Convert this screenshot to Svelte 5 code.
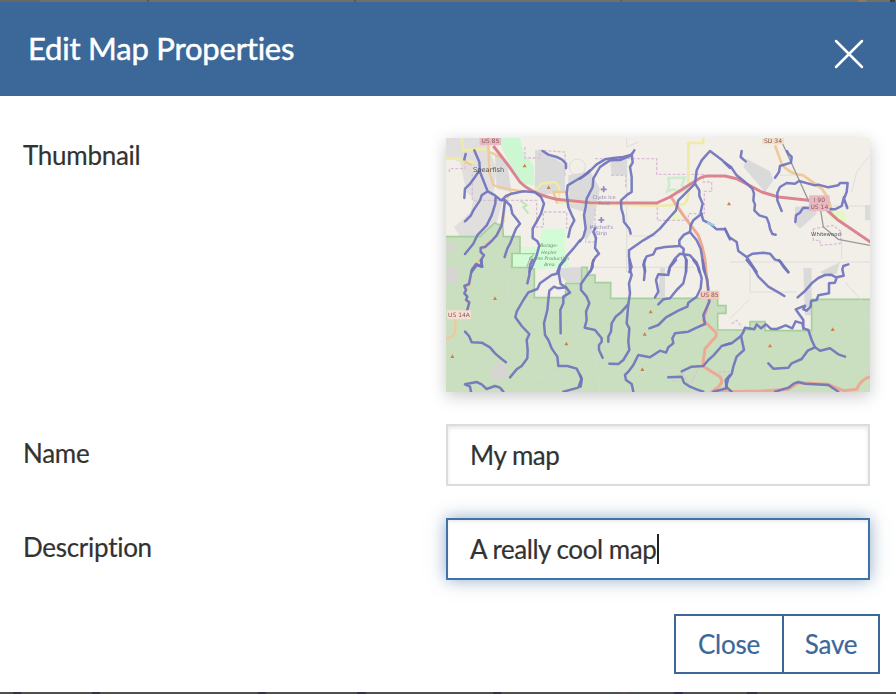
<script>
  // Streams traced per map sheet; each sheet has its own origin.
  const sheets = [
    { x: 0, y: 0, lines: [
      '77,66 73,82',
      '103,55 118,90 120,120 132,150 143,178 165,190 180,203 195,205',
      '120,112 105,135 88,158 75,170 73,198',
      '143,178 125,190 120,205 100,235 93,250 75,268',
      '167,195 166,215 155,250 140,280 112,310 100,335 75,366',
      '195,205 190,245 185,280 170,310 155,327 135,345 122,347 122,360 132,370 122,385 127,404 110,400 95,420',
      '195,205 212,222 217,245 230,262 240,275 228,290 220,310 210,335 202,350 194,375',
      '185,205 198,192 215,185 250,178 285,181 303,195 312,215 303,245 292,265 278,290 278,318 292,328 298,340 290,370 278,400 268,420',
      '308,57 325,68 350,75 365,82 378,95 378,108',
      '450,115 430,132 405,147 383,160 380,185 385,225 395,248 403,265 391,288 385,315',
      '420,325 400,350 382,370 360,400 352,420'
    ]},
    { x: 420, y: 0, lines: [
      '0,140 25,122 50,97 75,82 100,78 130,75 155,68 163,55',
      '155,70 120,84 90,85 70,98 60,105 40,140 38,165 20,200 17,225 12,250 17,290 10,315 0,328',
      '155,65 158,92 150,105 155,135 155,180 142,188 123,205 124,230 130,250 132,270 148,290 152,305',
      '46,288 40,300 48,318 45,348 57,365 45,377 38,392 38,405 30,420',
      '345,155 325,175 295,205 288,235 270,255 240,290 220,307 190,325 147,355 147,375 155,405 148,420',
      '450,108 425,83 390,57 378,70 365,85 350,115 345,155 358,175 358,192 368,215 362,240 370,265 390,275 410,292 435,291 450,322',
      '365,245 340,265 332,280 330,300 350,325 362,350 367,380 375,420',
      '330,300 312,308 298,325 298,342 255,345 228,350 220,367 200,373 192,390 195,420',
      '298,340 311,350 310,365 320,385 318,420',
      '265,420 270,403 285,380 300,365 330,370 350,392 358,420'
    ]},
    { x: 855, y: 0, lines: [
      '0,92 18,105 35,130 60,150 82,170 87,185 85,205 90,218 88,235 103,250 125,257 132,275 135,290 142,306 152,308',
      '50,57 47,75 62,88',
      '186,57 190,65 200,75 198,92 165,102 162,120 150,137',
      '170,237 157,205 157,182 165,165 185,153 210,155 222,147 270,160 280,158 310,166 340,160 345,153 368,153 365,180 357,200 367,228',
      '357,195 350,222 330,232 290,230 235,227 225,242 213,250 211,270',
      '0,290 12,315 35,330 40,357 65,375 95,420',
      '65,375 83,365 115,362 135,365 150,383 165,387 190,420'
    ]},
    { x: 0, y: 384, lines: [
      '125,0 125,20 108,12 95,30 87,72 73,78 78,90 73,100 82,110 78,120 88,127 83,145 77,165',
      '277,0 270,15 268,45 262,70',
      '375,0 360,17 356,40 335,45 300,70 292,87 265,97 250,120 230,155 226,172 245,198 268,222 260,240 263,270 262,295 245,318 230,328 210,352',
      '356,40 362,72 378,82 390,98 370,110 370,130 361,150 362,220',
      '378,82 355,85 342,80 328,92 325,120 322,150 312,190 315,225 325,240 335,265 352,290 355,318 382,318 410,326 425,355 415,383 370,395',
      '75,215 87,228 95,247 125,248 150,262 165,280 185,297 198,307',
      '93,395 90,380 75,373 110,366 125,373 140,387 165,378 180,383 190,395'
    ]},
    { x: 420, y: 384, lines: [
      '40,0 33,30 18,50 3,72 3,90 20,110 28,130 18,155 20,180 14,203 45,210 65,235 65,245 57,255 57,270 68,293',
      '148,0 150,30 155,45 147,70 150,100 145,132 140,190 148,205 145,245 148,270 130,300 115,312 88,311',
      '145,132 125,155 107,170 95,190 93,215 85,230 85,245',
      '195,0 190,15 195,30 192,60',
      '288,0 270,22 265,45 235,43 228,60 235,95 225,112',
      '318,0 318,35 310,70 290,90 270,115 250,118 235,133',
      '340,0 355,20 365,55 362,85 350,110 325,128 322,140 295,152 258,172 235,195 208,205',
      '368,0 370,25 382,60 388,125 370,165 375,192 350,203 325,215 285,220 277,235 280,250 265,262 258,278 240,272 210,292 175,285 160,315 145,335 135,345 138,360 155,372 160,395',
      '450,250 425,258 400,287 385,300 370,318 335,320 305,334',
      '265,352 305,350 312,368 330,380 350,388 370,395',
      '0,345 5,360 2,380',
      '400,395 440,385 437,360 450,345'
    ]},
    { x: 855, y: 384, lines: [
      '65,0 85,25 100,50 130,80 160,97 178,108',
      '162,0 175,20 190,37',
      '370,13 355,18 352,28 356,47 335,52 330,68 312,70 312,100 280,106 275,120 258,123 257,140 245,152 235,148 240,137 212,148 222,162 235,180 235,205',
      '218,112 240,93 260,70 280,54 300,45 318,44 333,52',
      '235,205 232,190 212,184 202,205 182,196 155,207 137,206 123,193 108,205 95,193 88,208 60,203 54,218 48,228 20,250 0,255',
      '48,228 52,247 57,270 35,290 25,320 20,342 10,355 3,380 20,395',
      '235,205 250,210 260,240 270,262 285,272 315,265 340,283 360,290',
      '270,262 248,272 230,297 200,310 190,323 145,326 130,310',
      '150,395 190,383 208,370 220,366 240,371 310,375 340,395'
    ]}
  ];

  const peaks = [
    [254, 101], [326, 166], [165, 499], [379, 635], [37, 673],
    [632, 539], [614, 606], [607, 712], [867, 215], [1178, 592], [990, 641]
  ];
</script>

<div class="page">
  <div class="backdrop top"></div>
  <header>
    <h1>Edit Map Properties</h1>
    <button class="dismiss" aria-label="Dismiss">
      <svg width="30" height="30" viewBox="0 0 30 30"><path d="M2 2 28 28M28 2 2 28" /></svg>
    </button>
  </header>

  <main>
    <div class="row thumb-row">
      <span class="label">Thumbnail</span>
      <div class="thumb">
        <svg class="map" width="424" height="254" viewBox="18 18 1272 762" preserveAspectRatio="none">
          <rect x="18" y="18" width="1272" height="762" fill="#f2efe9" />
          <g fill="#dadada">
            <path d="M18 18H150V60L170 110 160 190 190 200 165 290 120 330 60 312 42 285 60 270 92 240 100 200 80 180 60 90 18 75z" opacity=".75" />
            <path d="M165 70 200 90 215 180 170 170zM285 55H310L375 100V180L300 190 285 180zM385 130 450 118 480 170 465 245 455 300 435 330V240L385 225zM510 82H560V130H515z" />
            <path d="M362 406H425V450H380L360 430zM920 80 990 118 1000 145 975 180 910 105zM1065 225 1125 220 1130 245 1080 290 1065 275zM1090 408H1115V550H1095zM660 408H675V495H655z" />
            <path d="M1140 420 1200 390 1190 425 1160 430zM1275 220H1290V265H1275z" />
          </g>
          <path d="M172 18H240L252 65 280 100 285 160 250 155 210 100z" fill="#cdf7d1" />
          <path d="M305 290H375V365L390 407 283 411 283 380 245 375V345H300z" fill="#d3fbd6" />
          <path d="M700 235 730 262 695 265zM1160 238H1215V270L1175 265z" fill="#e4f7c5" />
          <path d="M685 138 735 137 725 160 740 170 720 180 700 172 682 178 688 158z" fill="none" stroke="#cdeccd" stroke-width="8" />

          <path
            d="M10 314H120L145 290 165 272 175 278H188L190 314H240V365H215V406H260L283 411V497H377V454H425V406H442V429H465V452H512V499H833V521H858V544H833V594H930V569H975V596H1115V502H1300V790H10z"
            fill="#cadfbf" stroke="#a5cf9d" stroke-width="5"
          />
          <path d="M217 365H283L270 380 260 406H217z" fill="#d3fbd6" stroke="#a5cf9d" stroke-width="4" />
          <g fill="#d6d5d1">
            <path d="M18 404H55V453H18zM150 720 165 697H185L200 690 207 725 180 747 155 740zM18 336H43V360H18z" />
          </g>

          <g class="minor">
            <path d="M560 18V45L595 30M560 70V420M560 312H650M870 390H1290M450 406H760M930 410V480H1070M930 500 870 560M1215 450 1260 500 1290 590M1290 70 1250 120 1235 180M1020 130 1090 128M200 420 210 520 160 600 150 630M205 660 210 635 230 630M290 740 350 725 390 745M1205 320V380M455 650 470 690 480 780M600 720 700 715M1180 222H1290" />
            <circle cx="412" cy="105" r="24" />
          </g>
          <g class="border">
            <path d="M255 45V78H300V55L375 60V135M28 120V110H75V85M97 125V205H290V285H310V240H380V290M465 80H650V127H790V150H815V178H793V245H745V265H652V212M465 230V330H435M513 130H557V170M1120 290V325H1140V340L1200 335 1205 300 1180 280 1120 290M700 750 725 720 750 760 775 710M835 720H870M875 575 890 565 905 585" />
          </g>

          <g class="yellow">
            <path d="M18 80H60L72 90H105M65 18 70 55 150 50M285 175 305 155 345 150 357 165V210L650 222 730 217Q745 210 745 180V33H790V18" />
          </g>
          <g class="tan">
            <path d="M70 85 95 100M145 40 148 120 160 160 210 172 250 178M195 205 190 270 170 310 122 350 130 370 95 415 88 460 75 480 80 500 88 530M380 180H340L352 215M46 560V590Q46 615 18 621M200 200 215 180M150 60 190 80" />
            <path d="M1005 40 1025 95Q1045 125 1090 130L1145 170Q1170 200 1175 240" stroke-width="8" />
          </g>
          <g class="salmon">
            <path d="M690 190 730 250 775 310Q796 360 798 420L808 504 790 565 820 594Q838 608 820 622L795 650 788 702 840 734Q852 750 835 765L815 779H860L965 777 1045 772 1075 752 1165 757 1210 776 1250 772Q1262 742 1290 734" />
          </g>
          <path class="red" d="M160 42 205 100 240 150Q275 185 350 202L450 212 650 213 690 195 765 148Q785 132 805 132H855L890 140 965 180 1015 195 1105 205 1145 220 1195 265 1300 336" />
          <path d="M1028 35 1105 205 1142 235 1150 285 1195 322 1290 340" fill="none" stroke="#9a9a97" stroke-width="4" />
          <path d="M240 205 260 220 250 225 265 245" fill="none" stroke="#c6e2bd" stroke-width="6" />

          {#each sheets as sheet}
            <g class="streams" transform="translate({sheet.x} {sheet.y})">
              {#each sheet.lines as points}
                <polyline {points} />
              {/each}
            </g>
          {/each}
          <path d="M800 272 823 280" stroke="#95cce2" stroke-width="7" />

          {#each peaks as [x, y]}
            <path d="M{x - 6} {y + 5}h12l-6-11z" fill="#ce8145" />
          {/each}

          <g class="shields">
            <rect x="119" y="10" width="64" height="30" rx="4" fill="#e9b9c2" />
            <text x="151" y="34">US 85</text>
            <rect x="966" y="8" width="66" height="29" rx="4" fill="#f0dfc4" />
            <text x="999" y="34">SD 34</text>
            <rect x="1107" y="190" width="62" height="48" rx="4" fill="#e9b9c2" />
            <text x="1138" y="211">I 90</text>
            <text x="1138" y="232">US 14</text>
            <rect x="21" y="535" width="72" height="27" rx="4" fill="#f5dfd0" />
            <text x="57" y="555">US 14A</text>
            <rect x="780" y="476" width="58" height="26" rx="4" fill="#f3cbbd" />
            <text x="809" y="496">US 85</text>
          </g>

          <g class="places">
            <text x="146" y="121" font-size="20">Spearfish</text>
            <text x="1158" y="311" font-size="16">Whitewood</text>
          </g>
          <g class="reserve">
            <text x="327" y="346">Bolage-</text>
            <text x="327" y="365">Hepler</text>
            <text x="328" y="384">Game Production</text>
            <text x="328" y="403">Area</text>
          </g>
          <g class="airfield">
            <path d="M491 163V181M482 172H500M484 255V273M475 264H493" />
            <text x="492" y="200">Clyde Ice</text>
            <text x="492" y="218">Field</text>
            <text x="484" y="291">Mitchell's</text>
            <text x="484" y="309">Strip</text>
          </g>
        </svg>
      </div>
    </div>

    <div class="row">
      <span class="label">Name</span>
      <div class="field" role="textbox" tabindex="-1" aria-label="Name">My map</div>
    </div>

    <div class="row">
      <span class="label">Description</span>
      <div class="field active" role="textbox" tabindex="-1" aria-label="Description">A really cool map<i class="caret"></i></div>
    </div>
  </main>

  <footer>
    <button>Close</button>
    <button>Save</button>
  </footer>
  <div class="backdrop bottom"></div>
</div>

<style>
  :global(body) {
    margin: 0;
  }
  .page {
    width: 896px;
    height: 694px;
    overflow: hidden;
    display: flex;
    flex-direction: column;
    background: #fff;
    color: #323232;
    font-family: Lato, 'Liberation Sans', sans-serif;
    font-size: 26px;
    font-variant-ligatures: none;
  }
  .backdrop {
    height: 2px;
    flex: none;
  }
  .top {
    background: linear-gradient(
      90deg,
      #686763 0 40px, #716f6b 40px 147px, #5c5b58 147px 149px, #716f6b 149px 354px,
      #5c5b58 354px 356px, #716f6b 356px 620px, #62615e 620px 622px, #716f6b 622px 858px,
      #917b56 858px 866px, #716f6b 866px 890px, #3f3f3e 890px 895px, #716f6b 895px
    );
  }
  .bottom {
    margin-top: auto;
    background: linear-gradient(
      90deg,
      #4b5148 0 13px, #303151 13px 21px, #4b5148 21px 92px, #303151 92px 100px,
      #4b5148 100px 258px, #303151 258px 266px, #4b5148 266px 357px, #303151 357px 366px,
      #4b5148 366px 493px, #303151 493px 501px, #4b5148 501px 619px, #644a48 619px 627px,
      #4b5148 627px 674px, #303151 674px 683px, #4b5148 683px 747px, #303151 747px 757px,
      #4b5148 757px
    );
  }
  header {
    box-sizing: border-box;
    height: 94px;
    flex: none;
    display: flex;
    justify-content: space-between;
    align-items: center;
    padding: 0 32px 0 28px;
    background: #3b6899;
  }
  h1 {
    margin: 0 0 2px;
    color: #fff;
    font-size: 31px;
    line-height: 36px;
    font-weight: 400;
    letter-spacing: -0.2px;
    -webkit-text-stroke: 0.5px #fff;
  }
  .dismiss {
    display: block;
    width: 30px;
    height: 30px;
    margin-top: 10px;
    padding: 0;
    border: 0;
    background: none;
  }
  .dismiss svg {
    display: block;
    fill: none;
    stroke: #fff;
    stroke-width: 2.5;
    stroke-linecap: round;
  }
  main {
    display: flex;
    flex-direction: column;
    gap: 32px;
    padding: 42px 26px 0 23px;
  }
  .row {
    display: flex;
    justify-content: space-between;
  }
  .label {
    padding-top: 13px;
    line-height: 32px;
    letter-spacing: -0.28px;
    -webkit-text-stroke: 0.2px #323232;
  }
  .thumb-row .label {
    padding-top: 1px;
  }
  .thumb {
    width: 424px;
    height: 254px;
    overflow: hidden;
    box-shadow: 0 4px 16px rgba(0, 0, 0, 0.22);
  }
  .map {
    display: block;
    filter: blur(0.55px);
  }
  .field {
    box-sizing: border-box;
    width: 424px;
    height: 62px;
    display: flex;
    align-items: center;
    padding: 0 22px;
    border: 2px solid #dcdcdc;
    box-shadow: inset 0 2px 4px rgba(0, 0, 0, 0.1);
    letter-spacing: -0.45px;
    -webkit-text-stroke: 0.2px #323232;
    white-space: pre;
  }
  .active {
    border-color: #3f72a8;
    box-shadow: inset 0 2px 3px rgba(0, 0, 0, 0.08), 0 0 16px rgba(59, 104, 153, 0.55);
  }
  .caret {
    width: 2px;
    height: 30px;
    margin-left: 1px;
    background: #222;
  }
  footer {
    display: flex;
    justify-content: flex-end;
    padding: 34px 16px 0;
  }
  footer button {
    box-sizing: border-box;
    height: 60px;
    width: 110px;
    padding: 0;
    border: 2px solid #3b6899;
    border-radius: 0;
    background: #fff;
    color: #3b6899;
    font: inherit;
    letter-spacing: -0.2px;
    -webkit-text-stroke: 0.2px #3b6899;
  }
  footer button + button {
    width: 98px;
    margin-left: -2px;
  }

  .minor {
    fill: none;
    stroke: #d8d9d4;
    stroke-width: 3;
    opacity: 0.8;
  }
  .border {
    fill: none;
    stroke: #dbbed6;
    stroke-width: 4;
    stroke-dasharray: 9 5;
  }
  .yellow,
  .tan,
  .salmon,
  .red {
    fill: none;
    stroke-linejoin: round;
  }
  .yellow {
    stroke: #eeeaa8;
    stroke-width: 8;
  }
  .tan {
    stroke: #efc998;
    stroke-width: 7;
  }
  .salmon {
    stroke: #eca993;
    stroke-width: 9;
  }
  .red {
    stroke: #da8491;
    stroke-width: 9;
  }
  .streams {
    fill: none;
    stroke: #7074bc;
    stroke-width: 7.5;
    stroke-linecap: round;
    stroke-linejoin: round;
    opacity: 0.92;
  }
  .shields text {
    fill: #875b60;
    font: 18px 'DejaVu Sans', sans-serif;
    text-anchor: middle;
  }
  .places text {
    fill: #4f4f55;
    font-family: 'DejaVu Sans', sans-serif;
    text-anchor: middle;
  }
  .reserve text {
    fill: #5f9a68;
    font: italic 14px 'DejaVu Sans', sans-serif;
    text-anchor: middle;
  }
  .airfield {
    fill: #8f84bd;
    font: 15px 'DejaVu Sans', sans-serif;
    text-anchor: middle;
  }
  .airfield path {
    stroke: #8f84bd;
    stroke-width: 5;
  }
</style>
